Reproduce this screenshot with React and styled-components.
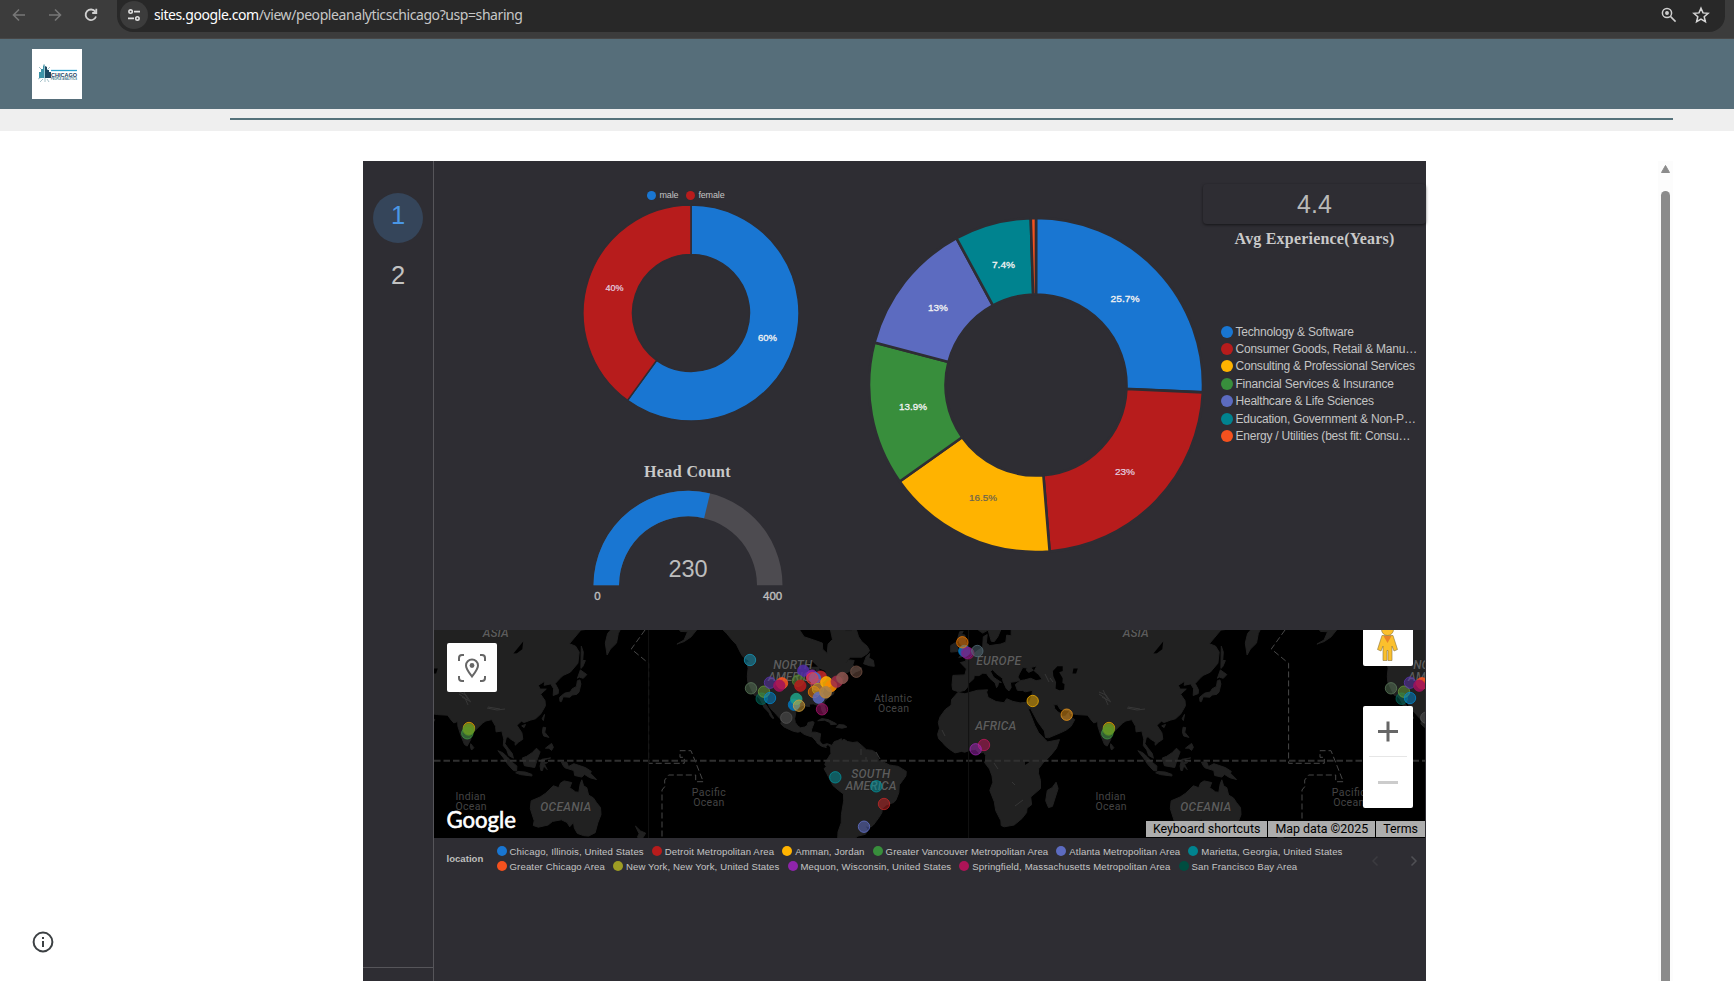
import React from "react";
import styled, { createGlobalStyle } from "styled-components";

const GlobalStyle = createGlobalStyle`
  * { box-sizing: border-box; }
  body { margin: 0; background: #fff; overflow: hidden; font-family: "Liberation Sans", Arial, sans-serif; }
  svg { display: block; }
`;

const Page = styled.div`
  display: flex;
  flex-direction: column;
  width: 1734px;
  height: 981px;
  overflow: hidden;
  background: #fff;
`;

/* ---------- browser toolbar ---------- */
const Toolbar = styled.div`
  flex: none;
  display: flex;
  align-items: flex-start;
  height: 39px;
  background: #3c3c3c;
  border-bottom: 1px solid #474747;
`;
const NavButtons = styled.div`
  display: flex;
  align-items: center;
  gap: 20px;
  width: 117px;
  height: 30px;
  padding-left: 11px;
`;
const AddressBar = styled.div`
  display: flex;
  align-items: center;
  width: 1608px;
  height: 32px;
  padding: 0 15px 3px 3px;
  background: #282828;
  border-radius: 0 0 16px 16px;
`;
const SiteInfo = styled.div`
  display: flex;
  align-items: center;
  justify-content: center;
  width: 28px;
  height: 28px;
  margin-right: 6px;
  border-radius: 50%;
  background: #3c3c3c;
`;
const Url = styled.div`
  flex: 1;
  font: 14px "Noto Sans", "Open Sans", sans-serif;
  letter-spacing: ${(p) => p.$tracking}px;
  color: #c7c7c7;
  white-space: nowrap;
`;
const Host = styled.span`
  color: #fff;
`;
const BarActions = styled.div`
  display: flex;
  gap: 14px;
`;

/* ---------- site header ---------- */
const SiteHeader = styled.header`
  flex: none;
  display: flex;
  align-items: center;
  height: 70px;
  padding: 0 32px;
  background: #566e7a;
`;
const Logo = styled.div`
  width: 50px;
  height: 50px;
  background: #fff;
`;
const Band = styled.div`
  flex: none;
  height: 22px;
  padding: 9px 61px 0 230px;
  background: #efefef;
`;
const Rule = styled.div`
  height: 2px;
  background: #55727b;
`;

/* ---------- body ---------- */
const Body = styled.main`
  flex: 1;
  min-height: 0;
  display: flex;
  padding-top: 30px;
`;
const Gutter = styled.div`
  width: 363px;
  padding: 769.5px 0 0 31.5px;
`;
const Scroll = styled.div`
  display: flex;
  flex-direction: column;
  align-items: center;
  gap: 18px;
  width: 15px;
  margin-left: 232px;
  padding-top: 4px;
  background: #fcfcfc;
`;
const Thumb = styled.div`
  flex: 1;
  width: 9px;
  border-radius: 5px 5px 0 0;
  background: #8b8b8b;
`;

const Report = styled.section`
  display: flex;
  width: 1063px;
  background: #2e2d33;
  color: #bdbdbd;
`;
const PageNav = styled.nav`
  display: flex;
  flex-direction: column;
  align-items: center;
  width: 71px;
  padding-top: 32px;
  gap: 10px;
  border-right: 1px solid #56555a;
`;
const PageLink = styled.div`
  width: 50px;
  height: 50px;
  border-radius: 50%;
  font-size: 25.5px;
  line-height: 44px;
  text-align: center;
  color: ${(p) => (p.$active ? "#4a97e6" : "#c2c2c2")};
  background: ${(p) => (p.$active ? "#35455a" : "transparent")};
`;
const NavRule = styled.div`
  width: 70px;
  height: 1px;
  margin-top: 654px;
  background: #56555a;
`;
const Canvas = styled.div`
  display: flex;
  flex-direction: column;
  width: 992px;
`;
const Charts = styled.div`
  display: flex;
  height: 469px;
`;
const PeopleColumn = styled.div`
  display: flex;
  flex-direction: column;
  align-items: center;
  width: 434px;
  padding: 29px 0 0 80px;
`;
const GenderLegend = styled.div`
  display: flex;
  gap: 8px;
  height: 14px;
  margin-right: 10px;
`;
const Key = styled.div`
  display: flex;
  align-items: center;
  gap: ${(p) => p.$gap}px;
  height: ${(p) => p.$height}px;
  font-size: ${(p) => p.$size}px;
  letter-spacing: ${(p) => p.$tracking}px;
  color: #c4c4c4;
  white-space: nowrap;
`;
const Dot = styled.i`
  flex: none;
  width: ${(p) => p.$size}px;
  height: ${(p) => p.$size}px;
  border-radius: 50%;
  background: ${(p) => p.$color};
`;
const Caption = styled.h3`
  margin: ${(p) => p.$top || 0}px 0 0;
  font: bold 16px/20px "Liberation Serif", "Times New Roman", serif;
  letter-spacing: ${(p) => p.$tracking || 0}px;
  color: #c9c9c9;
  text-align: center;
`;
const GaugeBlock = styled.div`
  display: flex;
  flex-direction: column;
  align-items: center;
  gap: 8px;
  margin: 40px 7px 0 0;
`;
const IndustryColumn = styled.div`
  width: 335px;
  padding-top: 56px;
`;
const ScoreColumn = styled.div`
  display: flex;
  flex-direction: column;
  width: 223px;
  padding-top: 23px;
`;
const ScoreCard = styled.div`
  height: 40px;
  border-radius: 4px;
  box-shadow: 0 1px 3px rgba(0, 0, 0, 0.55);
  font-size: 25px;
  line-height: 41px;
  text-align: center;
  color: #b9b9b9;
`;
const IndustryLegend = styled.div`
  padding: 74px 0 0 17.5px;
`;

/* ---------- map ---------- */
const MapFrame = styled.div`
  position: relative;
  height: 208px;
  margin-right: 1px;
  overflow: hidden;
  background: #000;
`;
const MapButton = styled.div`
  position: absolute;
  left: ${(p) => p.$left}px;
  top: ${(p) => p.$top}px;
  width: 50px;
  height: ${(p) => p.$height}px;
  border-radius: 2px;
  background: #fff;
`;
const Attribution = styled.div`
  position: absolute;
  right: 0;
  bottom: 1px;
  display: flex;
  gap: 1px;
  height: 16px;
  background: #000;
`;
const AttributionItem = styled.span`
  padding: 0 7px;
  font: 12.4px/16px Roboto, sans-serif;
  color: #000;
  background: #adadad;
  white-space: nowrap;
`;

const LocationLegend = styled.div`
  display: flex;
  height: 45px;
  padding-left: 12.5px;
`;
const LegendTitle = styled.div`
  width: 50px;
  padding-top: 15px;
  font-size: 9.6px;
  font-weight: bold;
`;
const LegendRows = styled.div`
  display: flex;
  flex-direction: column;
  width: 865px;
  padding-top: 6px;
`;
const LegendRow = styled.div`
  display: flex;
  gap: 8px;
  height: 15px;
`;
const Pager = styled.div`
  display: flex;
  align-items: center;
  gap: 31px;
  margin-left: 9px;
`;

/* ---------- chart helpers ---------- */
const polar = (cx, cy, r, deg) => {
  const a = ((deg - 90) * Math.PI) / 180;
  return `${(cx + r * Math.cos(a)).toFixed(2)} ${(cy + r * Math.sin(a)).toFixed(2)}`;
};
const ring = (cx, cy, R, r, from, to) => {
  const large = to - from > 180 ? 1 : 0;
  return `M${polar(cx, cy, R, from)} A${R} ${R} 0 ${large} 1 ${polar(cx, cy, R, to)} L${polar(cx, cy, r, to)} A${r} ${r} 0 ${large} 0 ${polar(cx, cy, r, from)}Z`;
};

function Donut({ cx, cy, outer, inner, gap, slices, fontSize }) {
  const pad = 1;
  const x0 = cx - outer - pad;
  const y0 = cy - outer - pad;
  const side = (outer + pad) * 2;
  const total = slices.reduce((s, d) => s + d.value, 0);
  let at = 0;
  return (
    <svg width={side} height={side} viewBox={`${x0} ${y0} ${side} ${side}`}>
      {slices.map((s) => {
        const from = at;
        at += (s.value / total) * 360;
        return <path key={s.color} d={ring(cx, cy, outer, inner, from, at)} fill={s.color} stroke="#2e2d33" strokeWidth={gap} />;
      })}
      {slices.filter((s) => s.label).map((s) => (
        <text key={s.label} x={s.x} y={s.y + fontSize * 0.36} fontSize={fontSize} textAnchor="middle" textLength={s.width} lengthAdjust="spacingAndGlyphs"
          fill={s.text || "#f2f2f2"} stroke={s.text || "#f2f2f2"} strokeWidth={s.text ? 0.2 : 0.3}>{s.label}</text>
      ))}
    </svg>
  );
}

const gender = [
  { value: 60, color: "#1976d2", label: "60%", x: 767.5, y: 337.5, width: 19 },
  { value: 40, color: "#b71c1c", label: "40%", x: 614.5, y: 287.5, width: 18, text: "#e4d3e0" },
];
const industries = [
  { value: 25.7, color: "#1976d2", label: "25.7%", x: 1124.5, y: 298.5, width: 29, name: "Technology & Software" },
  { value: 23, color: "#b71c1c", label: "23%", x: 1124.5, y: 471.5, width: 20, text: "#e4d3e0", name: "Consumer Goods, Retail & Manu…" },
  { value: 16.5, color: "#ffb300", label: "16.5%", x: 982.5, y: 497.5, width: 28, text: "#6b6450", name: "Consulting & Professional Services" },
  { value: 13.9, color: "#388e3c", label: "13.9%", x: 912.5, y: 406.5, width: 28, name: "Financial Services & Insurance" },
  { value: 13, color: "#5c6bc0", label: "13%", x: 937.5, y: 307.5, width: 20, name: "Healthcare & Life Sciences" },
  { value: 7.4, color: "#00838f", label: "7.4%", x: 1003, y: 264.5, width: 23, name: "Education, Government & Non-P…" },
  { value: 0.5, color: "#f4511e", name: "Energy / Utilities (best fit: Consu…" },
];

const locationRows = [
  [["#1976d2", "Chicago, Illinois, United States"], ["#b71c1c", "Detroit Metropolitan Area"], ["#ffb300", "Amman, Jordan"], ["#388e3c", "Greater Vancouver Metropolitan Area"], ["#5c6bc0", "Atlanta Metropolitan Area"], ["#00838f", "Marietta, Georgia, United States"]],
  [["#f4511e", "Greater Chicago Area"], ["#9e9d24", "New York, New York, United States"], ["#8e24aa", "Mequon, Wisconsin, United States"], ["#ad1457", "Springfield, Massachusetts Metropolitan Area"], ["#004d40", "San Francisco Bay Area"]],
];

/* ---------- world map data: lon,lat outlines ---------- */
const WORLD = 640;
const MERIDIAN = 968.5;
const EQUATOR = 760.7;
const project = (lon, lat) => {
  const x = MERIDIAN + (lon * WORLD) / 360;
  const y = EQUATOR - (WORLD / (2 * Math.PI)) * Math.log(Math.tan(Math.PI / 4 + (lat * Math.PI) / 360));
  return `${x.toFixed(1)} ${y.toFixed(1)}`;
};
const outline = (s) =>
  s.split(" ").map((p, i) => (i ? "L" : "M") + project(...p.split(",").map(Number))).join("") + "Z";

const land = [
  "-170,66 -165,62 -164,60 -162,58.6 -158,58.5 -160,56 -164,54.7 -160,55.5 -156,57 -153,59 -151,60 -148,60.5 -144,60 -139,59.5 -136,58 -133,56 -130.5,54.5 -128,51.5 -127,50.5 -124,49.2 -123,48.5 -124.6,48.3 -124,46 -124.4,43 -124.2,40.5 -122.5,37.7 -120.6,34.6 -118.4,33.8 -117.2,32.6 -116,30.5 -115,28.5 -114,27.8 -112.2,26 -111.5,24.5 -110,23 -109.5,23.3 -110.7,25 -111.5,26.6 -113,28.8 -114.8,31 -114.6,31.8 -113,31.2 -112,29 -110.5,27.3 -109,26 -108,25 -106,23 -105.3,21.5 -105.5,20.3 -104,18.8 -101.5,17.6 -98.5,16.3 -96,15.8 -94.5,16.2 -92.5,14.7 -90,13.8 -87.8,13.2 -87,12.2 -85.7,11 -85.3,10 -83.7,8.8 -82.8,8.2 -81,7.6 -80,7.4 -80.3,8.3 -79,9 -78,8 -77.5,7.5 -76.8,8.6 -79.5,9.5 -81.5,9 -82.5,9.3 -83.7,11 -83.5,13 -83.2,15 -86,15.8 -88.5,15.8 -88.2,17.5 -87.6,19 -86.8,21 -87.5,21.5 -90.3,21 -90.7,19.5 -92,18.6 -94.5,18.2 -96,19.2 -97.4,21 -97.8,23 -97.2,25.8 -97.3,27.6 -95.2,29 -93.5,29.7 -91,29.3 -89.3,29.1 -89.5,30.3 -87,30.4 -85.5,29.8 -84,30 -82.8,29 -82.7,27.7 -81.8,26 -81,25.1 -80.2,25.8 -80.6,28.3 -81.4,30.5 -80.8,32 -79,33.2 -77.9,34 -76,35 -75.6,36 -76.3,37.5 -75.2,38.3 -74.2,39.7 -74,40.6 -72,41.2 -70,41.7 -70.8,42.7 -70.2,43.7 -67,44.8 -65.5,45.3 -66.2,43.8 -65.3,43.5 -63.5,44.6 -61,45.3 -60,46.2 -61.5,46.4 -64.5,46.2 -65,47.5 -64.3,49 -67,49.2 -69.5,48 -66.5,50.2 -60,50.2 -57,51.4 -55.7,52.5 -57,54 -60,55.5 -61.8,57 -63,59 -64.8,60.4 -66,58.8 -69,58.8 -70,60.5 -73,62 -78,62.5 -78,60 -77,57.5 -76.5,56.2 -79,54.7 -79.5,51.5 -82,53 -82.2,55 -87,56 -92.5,57 -94.7,58.8 -95,61 -93,63 -93,67",
  "-59,47.8 -57.5,50.5 -55.5,51.5 -56,50 -53.5,49 -53,46.8 -55.5,47",
  "-84.8,21.9 -82.5,23.1 -79,22.5 -75,20.7 -74.2,20.1 -77.5,19.9 -78,21 -81,22.2",
  "-74.4,18.4 -73,19.9 -70,19.7 -68.4,18.6 -71,18",
  "-77.5,7.5 -77.4,4 -79,1.5 -80,0 -80.9,-2.2 -80,-3.3 -81.3,-4.5 -79.8,-7 -78,-10.5 -76.3,-13.8 -73,-16.5 -70.3,-18.4 -70.2,-22 -71.5,-29 -71.6,-33 -73.4,-37.2 -73.7,-42 -64,-42 -65,-40.8 -62.2,-39 -58,-38.2 -56.8,-36.4 -58.3,-34.3 -55,-34.9 -53.5,-34 -50.3,-30.3 -48.7,-28 -48.5,-25.8 -46,-24 -42,-22.9 -40.8,-21.5 -39.2,-17.7 -38.9,-13.5 -37,-11 -35.2,-8.5 -35,-6 -37,-4.8 -39.5,-3.2 -42,-2.8 -44.5,-2.4 -48,-0.7 -50.5,0 -51.5,4 -54,5.8 -57.5,6.2 -60,8.5 -62.5,10.5 -65,10.2 -68,10.7 -70,12 -71.6,11 -71.5,12.3 -73.5,11.3 -75.5,10.7 -76.8,8.6",
  "-6,35.8 -9.5,32.5 -9.8,29.8 -13,27.7 -16,24 -17,21 -16.3,18 -17.4,14.7 -16.8,12.3 -14.5,10 -13,8.3 -10.5,6.3 -7.6,4.4 -4,5.2 -2,4.8 1.2,6 4,6.4 6,4.3 8.5,4.6 9.7,3 9.5,0 9,-1 11.8,-4.7 13.2,-8.5 13.7,-12 12,-16.5 14.5,-22.5 15.3,-27 18.2,-32 18.4,-34.2 20,-34.8 25.7,-34 30,-31 32.7,-28 32.9,-25.8 35.5,-24 35,-20 40.5,-15.5 40.5,-11 39.3,-7 39.5,-4.5 42,-1.2 46,2.7 49.5,7 51.2,11.8 44.5,10.5 43,12 39.5,15.5 37.3,19.5 35.5,23.8 33.5,28 32.5,29.9 32.4,31.2 29,30.9 25,31.6 21.5,32.9 20,31 15.5,31.5 11,33.5 10.2,36 10.8,37 5,36.8 -2,35.2",
  "49.3,-12 50.4,-15.5 47.2,-24.9 45,-25.5 43.4,-22 44.3,-16.5 47,-15",
  "32.4,31.2 34.2,31.3 35.5,33.8 36,36.8 32,36.1 30.5,36.7 27.5,36.8 26.3,39.3 29,41 31.5,41.3 35,42 38,41 41.5,41.5 39.5,43.5 37,45 38.5,47 35,46.3 36.5,45.3 33.8,44.4 32.5,45.4 33,46.2 30.5,46.3 28.7,44 27.8,42.5 29,41.2 26.5,40.6 23.5,40.3 24,38 22.8,36.5 21.3,37.5 19.3,41 19.2,42 15.5,44 13.6,45.5 12.4,44.8 14,42.5 16,41.5 18.5,40.2 17,40.4 16.5,38.8 15.8,38 15,40 12,42 10,44 8,44.1 6,43.1 3.2,43.1 3,41.8 0,39.8 -0.5,38.3 -2,36.8 -5.5,36.1 -8.9,37 -9.3,39 -8.8,43.2 -2,43.4 -1.2,45.8 -4.6,48.2 -1.6,48.7 -1.5,49.7 1.5,50.4 4,52 8,53.7 8.3,57 10.5,57.7 10,55 12,54.2 18,54.7 21,55.3 21.5,57.5 24,57.3 24,59.2 30,60 22,60.5 21,63 25,65 18,63 17,60.5 18.5,59.5 16.5,57 14.5,55.5 12.8,55.6 11,59 8,58.1 5.5,59 5,62 10,66 180,66 180,62.5 170,60 165,60 163,58 162,55 158.5,53 156.7,51 155.7,55 157,58 163,61.5 160,61 155,59.3 148,59.4 142,59 135.5,54.8 139,54 141,52 140.3,48 136,44.5 132,43.2 130.6,42.3 127.5,39.8 129.4,37 129.2,35.3 126.4,34.4 126.6,37.5 125,39.6 121.3,39 121.8,40.8 118,39 119,37.3 122.5,37.3 119.3,35 121.8,32 122,29.5 119.5,25.5 116.5,23 113.5,22.2 110,21 108.5,21.7 106,19.5 108.8,15.5 109.3,12 106.8,10.3 105,8.7 105,10.5 102.5,12 101,13.3 100,13 99.2,9.5 101,7 103.4,4 104,1.4 101.3,3 100.3,6 98.3,8.5 98.6,12 97.5,16.5 94.3,16 94,19 91.8,22.5 88.5,21.8 86.8,20.8 82.3,16.6 80.2,15 80.1,12 78,8.2 76.5,9 74.5,14 72.8,19 72.7,21.5 70.5,20.8 69,22.3 67,24.8 61.5,25.1 57.3,25.6 56.5,27 51.5,27.8 50,30 48,30 48.5,28.2 50.2,26.5 51.5,25.8 51.5,24.2 54.5,24.2 56.3,26.2 56.7,24.3 59.8,22.5 57.7,19 55,17 52,15.6 45,12.8 43.3,13 42.7,16.5 39,21.3 35,28 34.9,29.5 34.2,27.8 32.6,29.9",
  "-5.5,50.1 1.3,51.2 1.7,52.8 0,53.5 -1.6,55.5 -2,57.5 -4,57.7 -3,58.6 -5,58.5 -6,56.5 -4.8,54.8 -3,54 -4.5,53 -5,51.8 -3,51.4",
  "-10,52 -6.3,52.2 -6,54 -7.3,55.2 -10,54.2",
  "130,33.5 131,34.3 133,35.5 136,36 137,37.4 139.5,38.5 140,41 141.4,41.3 142,39.5 140.9,36 139.8,35 137,34.6 135.8,33.6 132,33.8 131,31.5 130.2,31.5",
  "140,42 141.7,45.4 145.3,43.5 143.3,42 141,42.5",
  "142,46 142.2,54 143.3,52 143,49 144.5,49 143,46.6",
  "120.2,23 121.5,25.2 120.9,22",
  "108.7,19.2 110.8,20 110,18.3",
  "120.3,16 120.7,18.5 122.2,18.3 121.6,15.8 124,13 121,13.8",
  "122,7 125.5,9.7 126.5,7.5 125.5,5.8 124,7",
  "95.3,5.6 98,4.5 100.5,2.2 103.5,-1 106,-3 105.8,-5.8 104,-5.5 100.8,-2 98.5,1.5",
  "105.3,-6.8 106.5,-6 110.8,-6.4 114.4,-7.7 114.4,-8.6 108,-7.8",
  "109,1.5 111.5,2.5 114.5,4.5 117,7 119,5 117.5,1 116,-3.8 114,-3.5 110.2,-2.8",
  "119.5,-5.5 119,-3 120,0.8 125,1.6 120.5,0.3 121,-1 123.3,-1 121.5,-2 123,-5 121,-3 120.4,-5.5",
  "131,-0.8 134,-0.8 135,-3.3 138,-1.7 144.5,-3.9 147.8,-6 147.3,-7 150.8,-10.5 147,-9.5 144,-7.7 142.5,-9.2 138.5,-8.3 138,-5.5 133,-4 132,-2.8",
  "172.7,-34.5 175.5,-36.7 178.4,-37.7 177,-39.5 176,-41 175,-41 173.8,-39.3 174.7,-38",
  "80,9.5 81.8,7.3 80.5,6 79.8,7.5",
  "114,-22 113.5,-26 115.7,-32 115.2,-34.2 118,-35 123.5,-34 126,-32.3 131,-31.5 134.2,-32.8 135.7,-34.8 137.8,-32.8 138.3,-35.5 140,-37.8 143.5,-38.8 146.3,-39 150,-37.5 151.5,-33 153.3,-29 153,-25.5 150.8,-23 149,-20.5 146.3,-19 145.3,-15 143.5,-14 142.5,-10.7 141.6,-13 140.8,-17.5 139,-17.3 135.7,-15 136.8,-12.2 132.5,-11.3 130.5,-12.5 129.5,-15 126.5,-14 124,-16.3 122.2,-18 119,-20",
].map(outline).join("");

const lakes = [
  "47.5,45 50,46.8 53,46.8 53,45 51,44.5 53,42 52.8,40 54,39.5 53.8,37 51,36.8 49,37.6 49.3,40.3 47.7,43",
  "-92,46.7 -88,48.7 -84.7,46.6 -87.5,46.6",
  "-87.8,42 -86.3,42 -86,45.8 -87.6,44.5",
  "-82.4,43.2 -81.5,44.8 -80,44.8 -84,46 -83.4,44.3",
  "104,51.5 109.5,55.5 109,53 106,51.6",
  "58.5,44 59,46 61.5,46 60.5,44",
  "31.8,-2.4 34,-1 33.5,0.3 31.8,-0.4",
].map(outline).join("");

const rivers = "M459 694l6 4l3 7M462 697l9 5M487 708l10 2l8 -1M1099 692l7 3l4 6M1103 690l5 10M1128 707l12 2M1015 806l8 -6M1012 782l3 3M994 763l4 6M861 749v6M866 757v4M876 752l4 7M1045 674l4 8M1050 678l3 4M942 730l3 6";

const borderLine = "M645 630L631.3 649L648.6 663.3V763.3H684.3V757.3H680V750.7H691L703.3 781.7H695.7V775H668.7L664.7 780V786.7L662 790V838";

const regions = [
  ["ASIA", 1135.7, 637.3, 26], ["NORTH", 792.7, 669, 39], ["AMERICA", 793, 681, 50], ["EUROPE", 998.7, 664.8, 45],
  ["AFRICA", 995.7, 730, 41], ["SOUTH", 870.7, 778, 39], ["AMERICA", 871, 790, 51], ["OCEANIA", 1205.7, 811, 51],
];
const oceans = [
  ["Indian", 1110.5, 799.5, 30], ["Ocean", 1111, 809.7, 31], ["Pacific", 708.7, 796, 34], ["Ocean", 708.7, 806, 31],
  ["Atlantic", 893, 702.3, 38], ["Ocean", 893.5, 712.3, 31],
];
const markers = [
  [750, 660, "#1899bb"], [751, 688.3, "#5c7a5c"], [761.7, 698.7, "#00695c"], [764, 691.7, "#689f38"], [770, 682.7, "#5e35b1"],
  [770, 698, "#0288d1"], [782, 683.3, "#ff5722", 1], [779.3, 685.7, "#a0105c", 1], [803.3, 670.7, "#512da8", 1], [798, 680.7, "#558b2f"],
  [800.3, 685.7, "#b71c1c", 1], [820.7, 676.7, "#c62828", 1], [812, 675.7, "#8e24aa", 1], [815, 678.3, "#3f6fd0", 1], [812.3, 678.3, "#ff3d2e"],
  [816.7, 684.5, "#c04a68"], [814, 692, "#f57c00"], [818, 689, "#c0a020"], [818.7, 697.7, "#5c6bc0", 1], [826.3, 682.3, "#ffb300", 1],
  [831, 686, "#fb8c00", 1], [825.7, 692.3, "#8d7b70", 1], [825.5, 692.3, "#c98a2a"], [836.7, 681.7, "#a02c4a", 1], [842.3, 678, "#8f5650", 1],
  [856.3, 671.7, "#795548"], [794, 704.7, "#0277bd", 1], [796.3, 699, "#1fa187", 1], [799, 705.7, "#d9a43a"],
  [822, 709.3, "#ad1470"], [786.3, 717.7, "#555555"], [835.3, 777.3, "#00959f"], [876.3, 786.3, "#00959f"], [884, 804, "#c62828"], [864, 826.7, "#6474d0"],
  [964.3, 651, "#0277bd", 1], [968.3, 653.3, "#9c1060"], [966.7, 652.7, "#7b1f90"], [962.3, 642.3, "#f57c00"], [977.3, 651, "#546e7a"],
  [1032.7, 701, "#f5b000"], [1066.7, 714.7, "#f59e1b"], [984, 745, "#c2185b"], [975.7, 749.3, "#a327b8"],
  [1109, 728, "#e8a800"], [1107.3, 733.3, "#43a047"], [1108.7, 729.5, "#5f9425", 1],
];

const LEFT = 434;
const RIGHT = 1425;
const copies = [-WORLD, 0, WORLD];
const repeat = (labels) =>
  copies.flatMap((dx) => labels.map(([t, x, y, w]) => [t, x + dx, y, w])).filter(([, x, , w]) => x + w / 2 > LEFT && x - w / 2 < RIGHT);

function World() {
  return (
    <svg width="991" height="208" viewBox="434 630 991 208">
      {copies.map((dx) => (
        <g key={dx} transform={`translate(${dx} 0)`}>
          <path d={land} fill="#212121" stroke="#212121" strokeWidth="1" strokeLinejoin="round" />
          <path d={lakes} fill="#000" />
          <path d={rivers} fill="none" stroke="#373737" strokeWidth="1" />
          <path d={borderLine} fill="none" stroke="#484848" strokeWidth="1" strokeDasharray="6 3" />
        </g>
      ))}
      <path d="M434 760.700H1425" stroke="#303030" strokeWidth="2" strokeDasharray="6.500 3" />
      <path d="M648.600 630V838M968.600 630V838" stroke="#121212" strokeWidth="1" />
      <g textAnchor="middle" fontFamily="Roboto, sans-serif">
        {repeat(regions).map(([t, x, y, w], i) => (
          <text key={i} x={x} y={y} fontSize="12" fontStyle="italic" fontWeight="500" textLength={w} fill="#5c5c5c" stroke="#1a1a1a" strokeWidth="0.4" paintOrder="stroke">{t}</text>
        ))}
        {repeat(oceans).map(([t, x, y, w], i) => (
          <text key={i} x={x} y={y} fontSize="10.500" textLength={w} fill="#444">{t}</text>
        ))}
      </g>
      {copies.map((dx) => (
        <g key={dx} transform={`translate(${dx} 0)`}>
          {markers.map(([x, y, c, solid], i) => (
            <circle key={i} cx={x} cy={y} r="5.700" fill={c} fillOpacity={solid ? 0.85 : 0.5} stroke={c} strokeOpacity="0.75" strokeWidth="1" />
          ))}
        </g>
      ))}
      <text x="446.500" y="827.500" fontFamily="Lato, sans-serif" fontSize="22.500" textLength="69.500" lengthAdjust="spacingAndGlyphs" fill="#fff" stroke="#fff" strokeWidth="0.600">Google</text>
    </svg>
  );
}

function CompanyLogo() {
  return (
    <svg width="50" height="50" viewBox="0 0 50 50">
      <g stroke="#8fb3bd" strokeWidth="0.8" fill="none">
        <path d="M12 15v4M7 18l3 3M18 18l-3 3M6 30l4-2M8 33l3-3M13 29v4M17 33l-2-3" />
      </g>
      <path d="M7 29v-6h2v-3h2v-3l1.500 -1.500v13.500z" fill="#3d93a8" />
      <path d="M13 29v-12l2 1v3h2v2h2v6z" fill="#1d4761" />
      <path d="M19 21.500h26" stroke="#2aa0cc" strokeWidth="1.300" />
      <text x="19" y="27.500" fontSize="5.200" fontWeight="bold" textLength="26" lengthAdjust="spacingAndGlyphs" fill="#17405c">CHICAGO</text>
      <text x="19" y="31.200" fontSize="3" fontWeight="bold" textLength="26" lengthAdjust="spacingAndGlyphs" fill="#3c7488">PEOPLE ANALYTICS</text>
    </svg>
  );
}

export default function App() {
  return (
    <Page>
      <GlobalStyle />
      <Toolbar>
        <NavButtons>
          <svg width="16" height="16" viewBox="0 0 16 16" fill="none" stroke="#777" strokeWidth="1.6"><path d="M14 8H2.500M8 2.500L2.500 8L8 13.500" /></svg>
          <svg width="16" height="16" viewBox="0 0 16 16" fill="none" stroke="#777" strokeWidth="1.6"><path d="M2 8h11.500M8 2.500L13.500 8L8 13.500" /></svg>
          <svg width="16" height="16" viewBox="0 0 16 16" fill="none" stroke="#d0d0d0" strokeWidth="1.800"><path d="M13 9.500A5.300 5.300 0 1 1 12.300 4.700M13.300 1.800V6H9.200" /></svg>
        </NavButtons>
        <AddressBar>
          <SiteInfo>
            <svg width="14" height="14" viewBox="0 0 14 14" fill="none" stroke="#dedede" strokeWidth="1.600"><circle cx="3.600" cy="3.600" r="1.700" /><path d="M7 3.600h6M1 10.400h6" /><circle cx="10.400" cy="10.400" r="1.700" /></svg>
          </SiteInfo>
          <Url $tracking={-0.42}><Host>sites.google.com</Host>/view/peopleanalyticschicago?usp=sharing</Url>
          <BarActions>
            <svg width="18" height="18" viewBox="0 0 18 18" fill="none" stroke="#cfcfcf" strokeWidth="1.500"><circle cx="7" cy="7" r="4.600" /><path d="M10.400 10.400l5.200 5.200" /><circle cx="7" cy="7" r="1.200" fill="#cfcfcf" /></svg>
            <svg width="18" height="18" viewBox="0 0 18 18" fill="none" stroke="#d6d6d6" strokeWidth="1.500"><path d="M9 2.200l2 4.700 5.100.450-3.900 3.400 1.200 5L9 13.100l-4.400 2.650 1.200-5L1.900 7.350 7 6.900z" /></svg>
          </BarActions>
        </AddressBar>
      </Toolbar>
      <SiteHeader>
        <Logo><CompanyLogo /></Logo>
      </SiteHeader>
      <Band><Rule /></Band>
      <Body>
        <Gutter>
          <svg width="22" height="22" viewBox="0 0 22 22"><circle cx="11" cy="11" r="9.400" fill="none" stroke="#3c4043" strokeWidth="2" /><path d="M11 10v6M11 6v2" stroke="#3c4043" strokeWidth="2" /></svg>
        </Gutter>
        <Report>
          <PageNav>
            <PageLink $active>1</PageLink>
            <PageLink>2</PageLink>
            <NavRule />
          </PageNav>
          <Canvas>
            <Charts>
              <PeopleColumn>
                <GenderLegend>
                  {[["#1976d2", "male"], ["#b71c1c", "female"]].map(([c, t]) => (
                    <Key key={t} $gap={3} $height={10} $size={9} $tracking={-0.15}><Dot $size={9} $color={c} />{t}</Key>
                  ))}
                </GenderLegend>
                <Donut cx={691} cy={313} outer={108} inner={58.5} gap={1.5} slices={gender} fontSize={9} />
                <GaugeBlock>
                  <Caption $tracking={0.4}>Head Count</Caption>
                  <svg width="190" height="116" viewBox="592.8 489.5 190 116">
                    <path d={ring(687.8, 584.8, 94.5, 69, -90, 90)} fill="#4d4b50" />
                    <path d={ring(687.8, 584.8, 94.5, 69, -90, 13.5)} fill="#1976d2" />
                    <g fill="#bdbdbd">
                      <text x="687.800" y="576.500" fontSize="23.500" textAnchor="middle" textLength="39">230</text>
                      <text x="594" y="599.500" fontSize="11.500" stroke="#bdbdbd" strokeWidth="0.400">0</text>
                      <text x="782" y="599.500" fontSize="11.500" textAnchor="end" stroke="#bdbdbd" strokeWidth="0.400">400</text>
                    </g>
                  </svg>
                </GaugeBlock>
              </PeopleColumn>
              <IndustryColumn>
                <Donut cx={1035.5} cy={385} outer={167} inner={90.5} gap={2.6} slices={industries} fontSize={9.5} />
              </IndustryColumn>
              <ScoreColumn>
                <ScoreCard>4.4</ScoreCard>
                <Caption $tracking={0.2} $top={5}>Avg Experience(Years)</Caption>
                <IndustryLegend>
                  {industries.map((d) => (
                    <Key key={d.name} $gap={3} $height={17.4} $size={12} $tracking={-0.22}><Dot $size={12} $color={d.color} />{d.name}</Key>
                  ))}
                </IndustryLegend>
              </ScoreColumn>
            </Charts>
            <MapFrame>
              <World />
              <MapButton $left={13} $top={13} $height={49}>
                <svg width="50" height="49" viewBox="0 0 50 49" fill="none" stroke="#666" strokeWidth="2">
                  <path d="M12 18v-3q0-3 3-3h2M33 12h2q3 0 3 3v3M38 33v2q0 3-3 3h-2M17 38h-2q-3 0-3-3v-2" />
                  <path d="M25 33.500c-3-4-6-7.500-6-11a6 6 0 0 1 12 0c0 3.500-3 7-6 11z" />
                  <circle cx="25" cy="22.500" r="2.400" fill="#666" stroke="none" />
                </svg>
              </MapButton>
              <MapButton $left={929} $top={-14} $height={50}>
                <svg width="50" height="50" viewBox="0 0 50 50" stroke="#8a7340" strokeWidth="0.6">
                  <circle cx="24.500" cy="13.500" r="6" fill="#fbc02d" />
                  <path d="M19 19.500h11l4.500 14-3.500 1.500-2-5v14.500h-4v-10h-1v10h-4v-14.500l-2 5-3.500-1.500z" fill="#fbc02d" />
                  <path d="M20.500 20h8l-4 7z" fill="#e8832a" stroke="none" />
                </svg>
              </MapButton>
              <MapButton $left={929} $top={76} $height={101.5}>
                <svg width="50" height="101" viewBox="0 0 50 101" strokeWidth="3">
                  <path d="M15 25.500h20M25 15.500v20" stroke="#666" />
                  <path d="M6 50.500h38" stroke="#e6e6e6" strokeWidth="1" />
                  <path d="M15 76.500h20" stroke="#ccc" />
                </svg>
              </MapButton>
              <Attribution>
                <AttributionItem>Keyboard shortcuts</AttributionItem>
                <AttributionItem>Map data ©2025</AttributionItem>
                <AttributionItem>Terms</AttributionItem>
              </Attribution>
            </MapFrame>
            <LocationLegend>
              <LegendTitle>location</LegendTitle>
              <LegendRows>
                {locationRows.map((row, i) => (
                  <LegendRow key={i}>
                    {row.map(([c, t]) => (
                      <Key key={t} $gap={3} $height={14} $size={9.6} $tracking={0.13}><Dot $size={10} $color={c} />{t}</Key>
                    ))}
                  </LegendRow>
                ))}
              </LegendRows>
              <Pager>
                <svg width="8" height="12" viewBox="0 0 8 12" fill="none" stroke="#3c3b40" strokeWidth="1.500"><path d="M6.500 1.500L2 6l4.500 4.500" /></svg>
                <svg width="8" height="12" viewBox="0 0 8 12" fill="none" stroke="#505055" strokeWidth="1.500"><path d="M1.500 1.500L6 6l-4.500 4.500" /></svg>
              </Pager>
            </LocationLegend>
          </Canvas>
        </Report>
        <Scroll>
          <svg width="9" height="8" viewBox="0 0 9 8"><path d="M4.500 0.500L8.500 7.500H0.500z" fill="#8b8b8b" stroke="#8b8b8b" strokeLinejoin="round" /></svg>
          <Thumb />
        </Scroll>
      </Body>
    </Page>
  );
}
